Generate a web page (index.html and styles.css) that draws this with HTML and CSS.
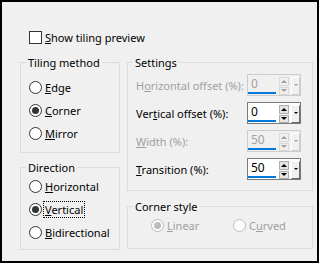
FILE: index.html
```html
<!DOCTYPE html>
<html>
<head>
<meta charset="utf-8">
<link rel="stylesheet" href="styles.css">
</head>
<body>
<div class="dialog">
  <label class="check-row"><span class="checkbox"></span><span class="lbl"><u>S</u>how tiling preview</span></label>
  <div class="columns">
    <div class="col col-left">
      <fieldset class="group tiling">
        <legend><span>Tiling method</span></legend>
        <div class="radio-row"><span class="radio"></span><span class="lbl"><u>E</u>dge</span></div>
        <div class="radio-row"><span class="radio checked"></span><span class="lbl"><u>C</u>orner</span></div>
        <div class="radio-row"><span class="radio"></span><span class="lbl"><u>M</u>irror</span></div>
      </fieldset>
      <fieldset class="group direction">
        <legend><span>Direction</span></legend>
        <div class="radio-row"><span class="radio"></span><span class="lbl"><u>H</u>orizontal</span></div>
        <div class="radio-row"><span class="radio checked"></span><span class="lbl focus"><u>V</u>ertical</span></div>
        <div class="radio-row"><span class="radio"></span><span class="lbl"><u>B</u>idirectional</span></div>
      </fieldset>
    </div>
    <div class="col col-right">
      <fieldset class="group settings">
        <legend><span>Settings</span></legend>
        <div class="set-row disabled">
          <span class="set-label">H<u>o</u>rizontal offset (%):</span>
          <div class="spin"><div class="field"><span class="val">0</span><span class="bar"></span></div><div class="updown"><span class="up"></span><span class="down"></span></div><div class="drop"><span class="caret"></span></div></div>
        </div>
        <div class="set-row">
          <span class="set-label">Ver<u>t</u>ical offset (%):</span>
          <div class="spin"><div class="field"><span class="val">0</span><span class="bar"></span></div><div class="updown"><span class="up"></span><span class="down"></span></div><div class="drop"><span class="caret"></span></div></div>
        </div>
        <div class="set-row disabled">
          <span class="set-label"><u>W</u>idth (%):</span>
          <div class="spin"><div class="field"><span class="val">50</span><span class="bar"></span></div><div class="updown"><span class="up"></span><span class="down"></span></div><div class="drop"><span class="caret"></span></div></div>
        </div>
        <div class="set-row">
          <span class="set-label"><u>T</u>ransition (%):</span>
          <div class="spin"><div class="field"><span class="val">50</span><span class="bar"></span></div><div class="updown"><span class="up"></span><span class="down"></span></div><div class="drop"><span class="caret"></span></div></div>
        </div>
      </fieldset>
      <fieldset class="group corner">
        <legend><span>Corner style</span></legend>
        <div class="corner-radios disabled">
          <div class="radio-row"><span class="radio checked"></span><span class="lbl"><u>L</u>inear</span></div>
          <div class="radio-row"><span class="radio"></span><span class="lbl">C<u>u</u>rved</span></div>
        </div>
      </fieldset>
    </div>
  </div>
</div>
</body>
</html>
```
FILE: styles.css
```css
html, body {
  margin: 0;
  padding: 0;
  background: #ffffff;
}

body {
  font-family: "Noto Sans", "Open Sans", sans-serif;
  font-size: 11px;
  color: #000;
}

.dialog {
  border: 2px solid #000;
  background: #f0f0f0;
  padding: 28px 0 0 18px;
  box-sizing: content-box;
  width: 297px;
  height: 231px;
}

.check-row {
  display: flex;
  align-items: center;
  height: 15px;
  margin-left: 9px;
  gap: 3px;
  margin-bottom: 10px;
}

.checkbox {
  width: 13px;
  height: 13px;
  box-sizing: border-box;
  border: 1px solid #333;
  background: #fff;
  flex: none;
}

.lbl {
  line-height: 15px;
  white-space: nowrap;
}

.columns {
  display: flex;
  gap: 7px;
}

.col {
  display: flex;
  flex-direction: column;
}

.col-left { width: 100px; }
.col-right { width: 186px; }

.group {
  margin: 0;
  border: 1px solid #dcdcdc;
  padding: 0 8px;
  min-width: 0;
}

.group legend {
  padding: 0 2px;
  margin-left: -3px;
  line-height: 15px;
  height: 15px;
}

.tiling { padding-top: 6px; padding-bottom: 7px; }
.direction { margin-top: 7px; padding-top: 0; padding-bottom: 5px; }
.settings { padding-top: 4px; padding-bottom: 10px; padding-right: 11px; }
.corner { margin-top: 8px; padding-top: 0; padding-bottom: 11px; }

.radio-row {
  display: flex;
  align-items: center;
  height: 23px;
  gap: 3px;
}

.radio {
  width: 13px;
  height: 13px;
  box-sizing: border-box;
  border: 1px solid #333;
  border-radius: 50%;
  background: #fff;
  flex: none;
  display: flex;
  align-items: center;
  justify-content: center;
}

.radio.checked::after {
  content: "";
  width: 7px;
  height: 7px;
  border-radius: 50%;
  background: #333;
}

.focus {
  outline: 1px dotted #000;
  outline-offset: 0;
  padding: 0 1px;
  margin-left: -1px;
}

.set-row {
  display: flex;
  align-items: center;
  justify-content: space-between;
  height: 22px;
  margin-bottom: 6px;
}

.set-row:last-child { margin-bottom: 0; }

.set-label { white-space: nowrap; }

.disabled .set-label,
.disabled .lbl { color: #a0a0a0; }

.spin {
  display: flex;
  width: 54px;
  height: 22px;
  box-sizing: border-box;
  border: 1px solid #7a7a7a;
  background: #fff;
  padding: 1px 0 0 0;
}

.disabled .spin {
  border-color: #cccccc;
  background: #f0f0f0;
}

.field {
  width: 31px;
  display: flex;
  flex-direction: column;
  justify-content: space-between;
}

.val {
  padding-left: 3px;
  line-height: 16px;
  font-size: 12px;
}

.disabled .val { color: #a0a0a0; }

.bar {
  height: 2px;
  width: 28px;
  background: #0078d7;
  margin-bottom: 1px;
}

.updown {
  width: 10px;
  display: flex;
  flex-direction: column;
  gap: 1px;
  padding-top: 1px;
}

.updown span {
  height: 8px;
  border: 1px solid #adadad;
  background: #e5e5e5;
  display: flex;
  align-items: center;
  justify-content: center;
}

.updown .up::after {
  content: "";
  border-left: 3px solid transparent;
  border-right: 3px solid transparent;
  border-bottom: 3px solid #000;
}

.updown .down::after {
  content: "";
  border-left: 3px solid transparent;
  border-right: 3px solid transparent;
  border-top: 3px solid #000;
}

.drop {
  width: 9px;
  height: 18px;
  margin-top: 1px;
  margin-left: 2px;
  box-sizing: border-box;
  border-top: 1px solid #fff;
  border-left: 1px solid #fff;
  border-right: 1px solid #696969;
  border-bottom: 1px solid #696969;
  background: #f0f0f0;
  display: flex;
  justify-content: center;
  padding-top: 6px;
}

.caret {
  width: 0;
  height: 0;
  border-left: 2px solid transparent;
  border-right: 2px solid transparent;
  border-top: 2px solid #000;
}

.disabled .updown span { background: #f0f0f0; border-color: #d9d9d9; }
.disabled .updown .up::after { border-bottom-color: #a0a0a0; }
.disabled .updown .down::after { border-top-color: #a0a0a0; }
.disabled .caret { border-top-color: #a0a0a0; }
.disabled .drop { border-right-color: #cfcfcf; border-bottom-color: #cfcfcf; }

.corner-radios {
  display: grid;
  grid-template-columns: 82px auto;
  margin-left: 15px;
}

.corner-radios .radio {
  border-color: #bcbcbc;
  background: #fdfdfd;
}

.corner-radios .radio.checked::after { background: #bcbcbc; }
```
